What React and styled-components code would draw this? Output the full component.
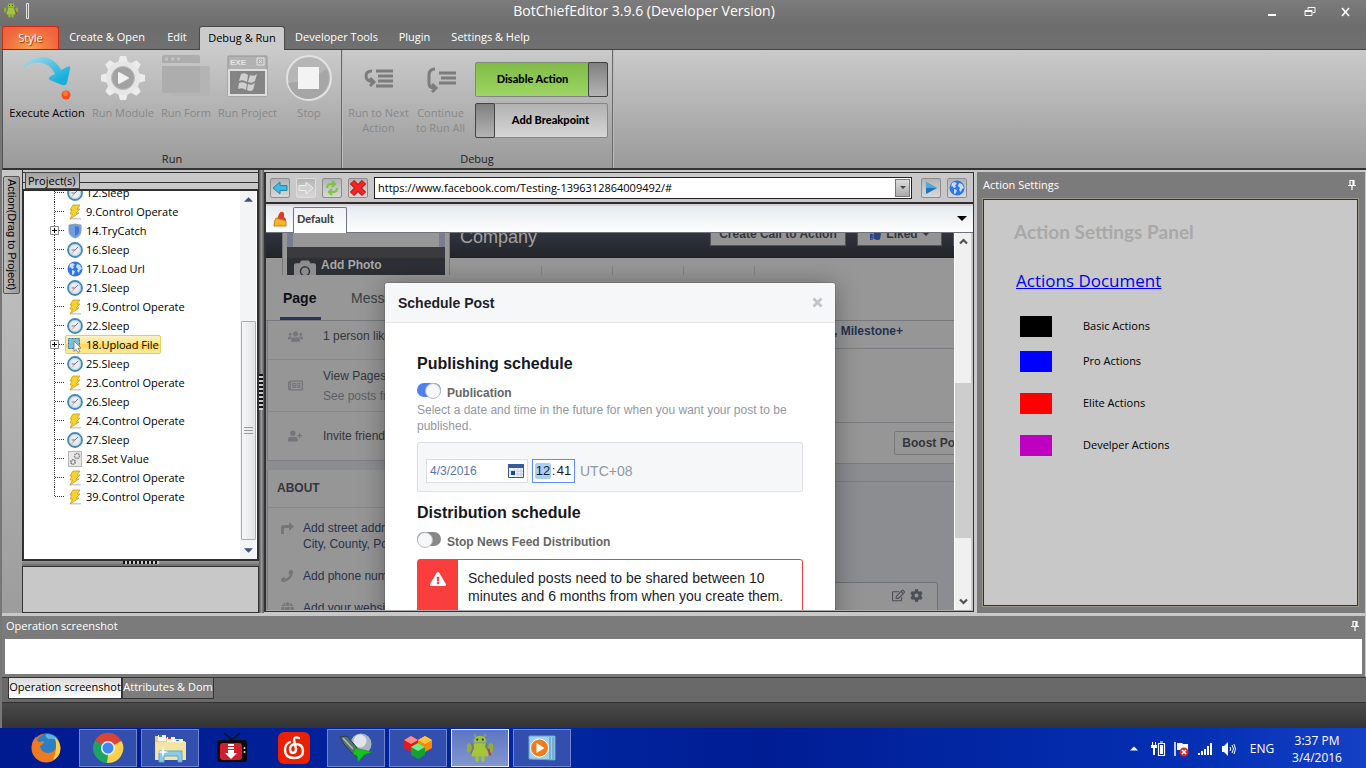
import React from 'react';
import styled, { createGlobalStyle } from 'styled-components';
import { FaCamera, FaUsers, FaUserPlus, FaPhoneAlt, FaGlobe, FaRegNewspaper, FaCog, FaRegEdit, FaThumbsUp, FaExclamationTriangle } from 'react-icons/fa';

const GlobalStyle = createGlobalStyle`
    * { box-sizing: border-box; }
    body { margin: 0; overflow: hidden; font-family: "Open Sans", "Noto Sans", sans-serif; font-size: 11px; color: #000; }
    button, input { font: inherit; color: inherit; margin: 0; padding: 0; border: 0; background: none; border-radius: 0; }
    h1, h2, h3, p, ul { margin: 0; padding: 0; font-weight: normal; list-style: none; }
    svg { display: block; flex: none; }
    a { color: inherit; text-decoration: none; }
`;

/* ---------- window ---------- */

const Desktop = styled.div`
    display: flex;
    flex-direction: column;
    height: 100vh;
    overflow: hidden;
    background: #6f6f6f;
`;

const TitleBar = styled.header`
    display: grid;
    grid-template-columns: 60px 1fr 110px;
    align-items: start;
    height: 26px;
    background: linear-gradient(#7c7c7c, #6d6d6d);
    color: #fff;
`;

const TitleLeft = styled.div`
    display: flex;
    gap: 7px;
    padding: 2px 0 0 3px;
`;

const Title = styled.h1`
    font-size: 14px;
    line-height: 22px;
    text-align: center;
    padding-right: 28px;
    white-space: nowrap;
`;

const WindowButtons = styled.div`
    display: flex;
    justify-content: flex-end;
    gap: 22px;
    padding: 4px 11px 0 0;
    button { width: 15px; height: 15px; }
`;

const AppWindow = styled.div`
    display: flex;
    flex-direction: column;
    flex: 1;
    min-height: 0;
    padding-left: 2px;
    background: #777;
`;

/* ---------- ribbon ---------- */

const RibbonTabs = styled.nav`
    display: flex;
    align-items: stretch;
    height: 24px;
    flex: none;
    background: linear-gradient(#6d6d6d, #707070);
    border-bottom: 1px solid #444;
`;

const RibbonTab = styled.button`
    width: ${p => p.$w}px;
    padding-bottom: 2px;
    color: #fff;
    text-align: center;
    white-space: nowrap;
`;

const StyleTab = styled(RibbonTab)`
    border: 1px solid #d02a12;
    border-bottom: 0;
    border-radius: 3px 3px 0 0;
    background: radial-gradient(ellipse at 50% 100%, #f9a24a, #f0673e 70%, #ee5f3b);
    text-shadow: 1px 1px 1px #8c2a10;
`;

const ActiveTab = styled(RibbonTab)`
    margin: 0 1px -1px 0;
    border: 1px solid #4a4a4a;
    border-bottom: 0;
    border-radius: 3px 3px 0 0;
    background: #cbcbcb;
    color: #000;
`;

const Ribbon = styled.div`
    display: flex;
    height: 120px;
    flex: none;
    background: linear-gradient(#cacaca, #9a9a9a);
    border-left: 1px solid #555;
    border-bottom: 2px solid #333;
`;

const RibbonGroup = styled.section`
    display: flex;
    flex-direction: column;
    justify-content: space-between;
    width: ${p => p.$w}px;
    border-right: 1px solid #6a6a6a;
    box-shadow: 1px 0 #bbb;
`;

const GroupBody = styled.div`
    display: grid;
    grid-template-columns: ${p => p.$cols};
    padding: 5px 4px 0 5px;
`;

const GroupName = styled.h2`
    font-size: 11px;
    line-height: 18px;
    text-align: center;
    color: #222;
`;

const RibbonButton = styled.button`
    display: flex;
    flex-direction: column;
    align-items: center;
    justify-content: flex-start;
    line-height: 15px;
    color: ${p => (p.disabled ? '#888' : '#000')};
    white-space: nowrap;
    svg { margin-bottom: 2px; }
`;

const Switches = styled.div`
    display: flex;
    flex-direction: column;
    gap: 6px;
    padding: 7px 0 0 4px;
`;

const Switch = styled.button`
    display: flex;
    flex-direction: ${p => (p.$on ? 'row' : 'row-reverse')};
    align-items: stretch;
    width: 133px;
    height: 35px;
    border: 1px solid #858585;
    border-radius: 2px;
    background: ${p => (p.$on ? 'linear-gradient(#7fbb45, #9dd664)' : 'linear-gradient(#b2b2b2, #d6d6d6)')};
    font-family: Lato, sans-serif;
    font-weight: 900;
    line-height: 32px;
    span { flex: 1; white-space: nowrap; }
    i {
        width: 20px;
        margin: -1px;
        border: 1px solid #444;
        border-radius: 2px;
        background: linear-gradient(#808080, #b4b4b4);
    }
`;

/* ---------- workspace ---------- */

const Workspace = styled.main`
    display: grid;
    grid-template-columns: 20px 237px 5px 1fr 3px 388px;
    flex: 1;
    min-height: 0;
    padding-right: 1px;
    background: #c8c8c8;
`;

const DragStrip = styled.aside`
    padding: 6px 2px 0 1px;
    background: linear-gradient(#c8c8c8, #9c9c9c);
`;

const DragTab = styled.button`
    width: 17px;
    height: 118px;
    border: 1px solid #555;
    border-radius: 2px;
    background: linear-gradient(90deg, #bbb, #989898);
    writing-mode: vertical-rl;
    font-family: "Liberation Sans", sans-serif;
    font-size: 11px;
    line-height: 15px;
    white-space: nowrap;
`;

const ProjectPane = styled.aside`
    display: flex;
    flex-direction: column;
    min-height: 0;
`;

const ProjectTabs = styled.div`
    flex: none;
    height: 19px;
    padding: 2px 0 0 2px;
    border-left: 1px solid #333;
    border-right: 1px solid #333;
    background: linear-gradient(#c8c8c8 2px, #333 2px 3px, #c8c8c8 3px 12px, #333 12px 13px, #c8c8c8 13px);
    button {
        display: block;
        width: 55px;
        height: 17px;
        padding-left: 2px;
        border: 1px solid #444;
        background: linear-gradient(#a2a2a2, #c4c4c4);
        line-height: 15px;
        text-align: left;
    }
`;

const TreeBox = styled.div`
    display: flex;
    flex: 1;
    min-height: 0;
    overflow: hidden;
    border: 2px solid #2e3032;
    background: #fff;
`;

const Tree = styled.ul`
    flex: 1;
    margin-top: -8px;
    padding-left: 26px;
`;

const TreeItem = styled.li`
    display: flex;
    align-items: center;
    height: 19px;
    white-space: nowrap;
`;

const Guide = styled.span`
    display: flex;
    align-items: center;
    width: 15px;
    height: 19px;
    background:
        repeating-linear-gradient(#333 0 1px, transparent 1px 2px) 4px 0 / 1px ${p => (p.$last ? '10px' : '100%')} no-repeat,
        repeating-linear-gradient(90deg, #333 0 1px, transparent 1px 2px) 5px 9px / 10px 1px no-repeat;
`;

const NodeLabel = styled.span`
    display: flex;
    align-items: center;
    gap: 3px;
    height: 19px;
    padding: 0 1px;
    border: 1px solid ${p => (p.$selected ? '#eac968' : 'transparent')};
    border-radius: 2px;
    background: ${p => (p.$selected ? 'linear-gradient(#fdf3c8, #fbe38c 45%, #fad75a 50%, #fdea9e)' : 'none')};
`;

const TreeScroll = styled.div`
    display: grid;
    grid-template-rows: 17px 113fr 220fr 2fr 17px;
    justify-items: center;
    align-items: center;
    width: 16px;
    margin-right: 1px;
    background: #f3f4f6;
    > svg:last-child { grid-row: 5; }
`;

const TreeThumb = styled.div`
    display: grid;
    place-items: center;
    grid-row: 3;
    width: 15px;
    height: 100%;
    border: 1px solid #a9adb3;
    border-radius: 1px;
    background: linear-gradient(90deg, #f6f6f6, #e2e4e6);
`;

const Splitter = styled.div`
    flex: none;
    height: 5px;
    display: grid;
    justify-content: center;
    background: linear-gradient(#999, #6a6a6a);
`;

const Grip = styled.i`
    width: ${p => (p.$vertical ? '4px' : '36px')};
    height: ${p => (p.$vertical ? '36px' : '3px')};
    background: repeating-linear-gradient(${p => (p.$vertical ? '180deg' : '90deg')}, #111 0 2px, #ccc 2px 4px);
`;

const LowerBox = styled.div`
    flex: none;
    height: 47px;
    border: 1px solid #333;
    background: #c8c8c8;
`;

const VSplitter = styled.div`
    display: grid;
    align-content: center;
    background: linear-gradient(90deg, #555, #999, #555);
`;

/* ---------- embedded browser ---------- */

const Browser = styled.section`
    display: flex;
    flex-direction: column;
    min-width: 0;
    min-height: 0;
    margin: 2px 0 1px;
    border: 1px solid #333;
    border-left-width: 2px;
    background: #c8c8c8;
`;

const AddressBar = styled.div`
    display: flex;
    align-items: center;
    flex: none;
    gap: 6px;
    height: 31px;
    padding: 0 6px 0 4px;
    border-bottom: 2px solid #2f2c30;
`;

const ToolButton = styled.button`
    display: grid;
    place-items: center;
    width: 20px;
    height: 20px;
    flex: none;
    border: 1px solid ${p => (p.disabled ? '#ddd' : '#8d8d8d')};
    border-radius: 2px;
    background: linear-gradient(#b4b4b4, #d8d8d8);
`;

const UrlBox = styled.div`
    display: flex;
    align-items: center;
    flex: 1;
    height: 22px;
    margin-right: 3px;
    padding: 1px;
    border: 1px solid #222;
    background: #fff;
    input { flex: 1; min-width: 0; padding-left: 2px; outline: 0; }
    button {
        display: grid;
        place-items: center;
        width: 15px;
        height: 18px;
        border: 1px solid #777;
        background: linear-gradient(#ddd, #aaa);
    }
`;

const PageTabs = styled.div`
    display: flex;
    align-items: flex-end;
    flex: none;
    height: 29px;
    padding-right: 5px;
    border-top: 2px solid #d8d0d4;
    border-bottom: 1px solid #70747e;
    background: linear-gradient(#e6eaef, #fdfdfe);
`;

const BroomButton = styled.button`
    display: grid;
    place-items: center;
    width: 27px;
    height: 26px;
`;

const PageTab = styled.button`
    width: 54px;
    height: 26px;
    margin: 0 auto -1px 0;
    padding: 0 0 4px 3px;
    border: 1px solid #70747e;
    border-bottom: 0;
    border-radius: 2px 2px 0 0;
    background: linear-gradient(#eef1f5, #fff);
    color: #444;
    font-family: Lato, sans-serif;
    font-weight: 900;
    text-align: left;
`;

const TabMenu = styled.button`
    display: grid;
    place-items: center;
    width: 12px;
    height: 28px;
`;

const Viewport = styled.div`
    display: flex;
    flex: 1;
    min-height: 0;
    padding-right: 2px;
    border-bottom: 1px solid #aaa;
    font-family: "Liberation Sans", sans-serif;
    font-size: 12px;
`;

const Page = styled.div`
    position: relative;
    flex: 1;
    min-width: 0;
    overflow: hidden;
    background: #8b8d91;
    color: #33363d;
`;

const PageScroll = styled.div`
    display: grid;
    grid-template-rows: 17px 133fr 155fr 55fr 17px;
    place-items: center;
    width: 17px;
    border-left: 1px solid #fff;
    background: #f0f0f0;
    i { grid-row: 3; width: 100%; height: 100%; background: #cdcdcd; }
    svg:last-child { grid-row: 5; }
`;

const Cover = styled.div`
    display: grid;
    grid-template-columns: 16px 168px 1fr;
    height: 42px;
    background: linear-gradient(#30343e, #222429 25px, #979797 25px);
`;

const Portrait = styled.div`
    grid-column: 2;
    display: flex;
    flex-direction: column;
    padding: 0 4px;
    border-left: 1px solid #777;
    border-right: 1px solid #777;
    background: #979797;
    overflow: hidden;
`;

const Photo = styled.div`
    height: 14px;
    flex: none;
    border: solid #787d90;
    border-width: 0 6px;
    background: #979797;
`;

const AddPhoto = styled.button`
    display: flex;
    align-items: center;
    gap: 5px;
    height: 35px;
    flex: none;
    padding-left: 7px;
    background: linear-gradient(#3b3b3d 10px, #2d2f36 12px);
    color: #a8a8a8;
    font-weight: bold;
    svg { margin-top: 10px; color: #8d8d8d; }
`;

const CoverBar = styled.div`
    display: grid;
    grid-template-rows: 25px 17px;
    grid-template-columns: 1fr 136px 85px 1px;
    column-gap: 11px;
    min-width: 0;
    overflow: hidden;
`;

const PageName = styled.h2`
    height: 25px;
    padding-left: 10px;
    color: #a2a2a2;
    font-size: 18px;
    line-height: 8px;
`;

const CoverButton = styled.button`
    display: flex;
    align-items: center;
    justify-content: center;
    gap: 5px;
    height: 24px;
    margin-top: -11px;
    border: 1px solid #555;
    background: #949494;
    font-weight: bold;
`;

const CoverNav = styled.ul`
    display: flex;
    grid-column: 1 / -1;
    align-items: end;
    padding-left: 21px;
    li { width: 71px; height: 9px; border-right: 1px solid #848484; }
`;

const PageNav = styled.nav`
    display: flex;
    height: 46px;
    padding-left: 14px;
    border-bottom: 1px solid #77797c;
    background: #979797;
`;

const PageNavLink = styled.a`
    width: 41px;
    margin-right: 30px;
    border-bottom: ${p => (p.$active ? '3px solid #26355d' : '0')};
    font-size: 14px;
    font-weight: ${p => (p.$active ? 'bold' : 'normal')};
    color: ${p => (p.$active ? '#0e1016' : '#3a3e47')};
    line-height: 46px;
    padding-left: ${p => (p.$active ? '3px' : '0')};
`;

const Columns = styled.div`
    display: grid;
    grid-template-columns: 320px 1fr;
`;

const Card = styled.section`
    margin: 0 0 9px 1px;
    border: 1px solid #7d7f83;
    border-top: 0;
    background: #969696;
`;

const InfoRow = styled.div`
    display: grid;
    grid-template-columns: 55px 1fr;
    align-items: center;
    height: ${p => p.$h}px;
    border-bottom: 1px solid #85878b;
    line-height: 20px;
    white-space: nowrap;
    &:first-child { padding-bottom: 8px; }
    &:last-child { border-bottom: 0; }
    svg { margin-left: 20px; color: #74767b; }
    small { display: block; font-size: 12px; color: #5c5f66; }
`;

const AboutTitle = styled.h3`
    height: 38px;
    padding-left: 9px;
    border-bottom: 1px solid #85878b;
    color: #34363c;
    font-size: 12px;
    font-weight: bold;
    line-height: 37px;
`;

const AboutLink = styled.a`
    display: grid;
    grid-template-columns: 35px 1fr;
    line-height: 16px;
    padding-top: 12px;
    margin-bottom: 4px;
    color: #26324f;
    white-space: nowrap;
    svg { margin: 2px 0 0 13px; color: #74767b; }
`;

const PhoneIcon = styled(FaPhoneAlt)`
    transform: scaleX(-1);
`;

const Feed = styled.div`
    padding-left: 200px;
`;

const ComposerRow = styled.div`
    display: flex;
    align-items: center;
    justify-content: flex-end;
    height: ${p => p.$h}px;
    border-bottom: 1px solid #7b7d82;
    background: #969696;
    overflow: hidden;
    white-space: nowrap;
`;

const Milestone = styled.a`
    width: 120px;
    padding-bottom: 8px;
    color: #26324f;
    font-weight: bold;
`;

const Boost = styled.button`
    width: 80px;
    height: 24px;
    margin-right: -20px;
    flex: none;
    border: 1px solid #777;
    border-radius: 2px;
    font-weight: bold;
`;

const FeedGap = styled.div`
    height: 18px;
    border-bottom: 1px solid #7b7d82;
`;

const PostCard = styled.div`
    display: flex;
    justify-content: flex-end;
    gap: 5px;
    height: 60px;
    margin: 100px 16px 0 0;
    padding: 6px 14px;
    border: 1px solid #6e7179;
    border-radius: 2px;
    background: #949494;
    color: #4b4e56;
`;

/* ---------- schedule dialog ---------- */

const Dialog = styled.form`
    position: absolute;
    top: 50px;
    left: 119px;
    width: 450px;
    height: 420px;
    border-radius: 3px;
    background: #fff;
    box-shadow: 0 2px 26px rgba(0, 0, 0, 0.35), 0 0 0 1px rgba(0, 0, 0, 0.1);
    color: #1d2129;
`;

const DialogHead = styled.header`
    display: flex;
    align-items: center;
    justify-content: space-between;
    height: 40px;
    padding: 0 12px 0 13px;
    border-bottom: 1px solid #e5e5e5;
    border-radius: 3px 3px 0 0;
    background: #f6f7f9;
    h2 { font-size: 14px; font-weight: bold; }
`;

const DialogBody = styled.div`
    padding: 30px 32px 0;
    h3 { font-size: 16px; font-weight: bold; line-height: 22px; color: #141823; }
`;

const ToggleRow = styled.label`
    display: flex;
    align-items: center;
    gap: 6px;
    height: 27px;
    padding-top: 2px;
    color: #666;
    font-weight: bold;
    span { padding-top: 6px; }
`;

const Toggle = styled.input`
    appearance: none;
    display: flex;
    justify-content: flex-end;
    width: 24px;
    height: 14px;
    border-radius: 7px;
    background: #888;
    flex-direction: row-reverse;
    &::before {
        content: "";
        width: 14px;
        height: 14px;
        border: 1px solid #bbb;
        border-radius: 50%;
        background: #f6f7f9;
    }
    &:checked { background: #4e80ee; flex-direction: row; }
`;

const Hint = styled.p`
    line-height: 16px;
    color: #9197a3;
`;

const DateBox = styled.div`
    display: flex;
    align-items: center;
    height: 50px;
    margin: 8px 0 10px;
    padding: 7px 8px 0;
    border: 1px solid #dddfe2;
    border-radius: 2px;
    background: #f6f7f9;
    color: #9197a3;
    font-size: 14px;
`;

const DateField = styled.label`
    display: flex;
    align-items: center;
    width: 102px;
    height: 24px;
    margin-right: 4px;
    padding: 0 3px;
    border: 1px solid #dcdee3;
    background: #fff;
    color: #5a74ab;
    font-size: 12px;
    input { flex: 1; min-width: 0; }
`;

const TimeField = styled.div`
    display: flex;
    align-items: center;
    justify-content: center;
    width: 43px;
    height: 24px;
    margin-right: 5px;
    border: 1px solid #5890ff;
    background: #fff;
    color: #1d2129;
    font-size: 13px;
    input { width: 16px; height: 16px; text-align: center; }
    input:first-child { background: #a9cff8; border-radius: 2px; }
    span { width: 5px; text-align: center; }
`;

const Alert = styled.div`
    display: grid;
    grid-template-columns: 40px 1fr;
    height: 80px;
    margin-top: 8px;
    border: 1px solid #fa3e3e;
    border-radius: 3px;
    font-size: 14px;
    line-height: 18px;
    svg { justify-self: center; margin-top: 11px; color: #fff; }
    i { display: grid; background: #fa3e3e; align-items: start; }
    p { padding: 9px 0 0 10px; white-space: nowrap; }
`;

/* ---------- settings ---------- */

const SettingsPane = styled.aside`
    display: flex;
    flex-direction: column;
    margin-top: 2px;
    padding: 0 7px 7px 6px;
    background: #7b7b7b;
`;

const PaneHead = styled.header`
    display: flex;
    align-items: center;
    justify-content: space-between;
    height: ${p => p.$h}px;
    flex: none;
    padding: 0 2px 2px 0;
    color: #fff;
    h2 { font-size: 11px; }
`;

const SettingsBox = styled.div`
    flex: 1;
    padding: 21px 30px;
    border: 1px solid #333;
    outline: 1px solid #9c998c;
    background: #c8c8c8;
`;

const SettingsTitle = styled.h2`
    color: #a8a8a8;
    font-family: Lato, sans-serif;
    font-size: 19px;
    font-weight: bold;
    line-height: 22px;
    margin-bottom: 24px;
`;

const DocLink = styled.a`
    display: inline-block;
    margin: 0 0 22px 2px;
    color: #0000f0;
    font-size: 17px;
    line-height: 27px;
    text-decoration: underline;
`;

const Legend = styled.ul`
    padding-left: 6px;
    li { display: flex; align-items: center; gap: 31px; height: 21px; margin-bottom: 21px; }
    li:first-child { margin-bottom: 14px; }
    span { padding-bottom: 3px; }
`;

const Swatch = styled.i`
    width: 32px;
    height: 21px;
    background: ${p => p.$color};
`;

/* ---------- bottom panel ---------- */

const OperationPane = styled.section`
    flex: none;
    border-top: 3px solid #c8c8c8;
    border-right: 1px solid #c8c8c8;
    background: #7b7b7b;
    padding: 0 3px 3px;
    ${PaneHead} { padding: 0 3px 4px 1px; }
`;

const Output = styled.div`
    height: 35px;
    background: #fff;
`;

const BottomTabs = styled.div`
    display: flex;
    height: 26px;
    flex: none;
    padding-left: 6px;
    border-top: 1px solid #333;
    border-bottom: 1px solid #333;
    background: #696969;
`;

const BottomTab = styled.button`
    width: ${p => p.$w}px;
    height: 21px;
    padding-bottom: 3px;
    border: 1px solid #333;
    border-top: 0;
    background: ${p => (p.$active ? 'linear-gradient(#dcdcdc, #fff)' : '#7d7d7d')};
    color: ${p => (p.$active ? '#000' : '#fff')};
    white-space: nowrap;
`;

const StatusBar = styled.footer`
    height: 25px;
    flex: none;
    background: linear-gradient(#4a4a4a, #333);
`;

/* ---------- taskbar ---------- */

const TaskBar = styled.footer`
    display: flex;
    justify-content: space-between;
    height: 40px;
    flex: none;
    background: linear-gradient(90deg, #001a90, #0026a0 40%, #001d94 56%, #0430b4 88%, #1440c6);
    color: #fff;
`;

const Tasks = styled.div`
    display: flex;
    gap: 4px;
    padding: 1px 0 1px 17px;
`;

const Task = styled.button`
    display: grid;
    place-items: center;
    width: 58px;
    border: 1px solid ${p => (p.$state === 'active' ? '#e8ecff' : p.$state === 'open' ? '#6f86cc' : 'transparent')};
    background: ${p => (p.$state === 'active' ? 'linear-gradient(#5b76c2, #8496cf)' : p.$state === 'open' ? '#324fae' : 'none')};
`;

const Tray = styled.div`
    display: flex;
    align-items: center;
    gap: 8px;
    padding-top: 1px;
    font-size: 12px;
    > svg:first-child { margin-right: 4px; }
`;

const Lang = styled.button`
    width: 34px;
`;

const Clock = styled.div`
    width: 79px;
    padding-right: 19px;
    line-height: 17px;
    text-align: center;
`;

/* ---------- drawings ---------- */

const Android = ({ size }) => (
    <svg width={size} height={size} viewBox="0 0 32 32">
        <path d="M10 1l2 4M22 1l-2 4" stroke="#93a84a" strokeWidth="1.4" />
        <path d="M9 10q0-7 7-7t7 7z" fill="#9cc03e" />
        <path d="M10 11h12q1 5 3 12 .5 2-2 2H9q-2.500 0-2-2 2-6 3-12z" fill="#a4c639" />
        <rect x="2" y="11" width="5" height="10" rx="2.500" fill="#8fb033" />
        <rect x="25" y="11" width="5" height="10" rx="2.500" fill="#8fb033" />
        <rect x="11" y="24" width="4" height="7" rx="2" fill="#9cc03e" />
        <rect x="17" y="24" width="4" height="7" rx="2" fill="#9cc03e" />
        <circle cx="13" cy="7" r="1.200" fill="#333" /><circle cx="19" cy="7" r="1.200" fill="#333" />
        <path d="M7 11l2 5-3 6M24 10l-2 4 3 5" stroke="#777" strokeWidth="1.500" fill="none" />
        <path d="M25 17l2 7" stroke="#c33" strokeWidth="2" />
    </svg>
);

const ExecuteIcon = () => (
    <svg width="50" height="48" viewBox="0 0 50 48">
        <defs><linearGradient id="arrow" x1="0" y1="0" x2="1" y2="1"><stop offset="0" stopColor="#a6dcf0" /><stop offset=".8" stopColor="#17b0dd" /></linearGradient></defs>
        <path d="M1 13C10-1 30-3 39 15L45 12Q49 10 48 14L45 28Q44 31 40 30L28 25Q25 23 29 21L33 19C28 8 15 3 1 13z" fill="url(#arrow)" />
        <circle cx="44" cy="40" r="4.500" fill="#fb4a1c" /><circle cx="43.500" cy="38.500" r="2.500" fill="#fd7b2c" />
    </svg>
);

const teeth = [0, 45, 90, 135, 180, 225, 270, 315];
const GearIcon = () => (
    <svg width="50" height="48" viewBox="0 0 50 48">
        {teeth.map(a => <path key={a} d="M20 8l2-7h6l2 7z" fill="#ececec" transform={'rotate(' + a + ' 25 23)'} />)}
        <circle cx="25" cy="23" r="17" fill="#e6e6e6" />
        <circle cx="25" cy="23" r="11.500" fill="#a2a2a2" stroke="#bcbcbc" />
        <path d="M21 18v10l9-5z" fill="#f1f1f1" stroke="#f1f1f1" strokeWidth="2" strokeLinejoin="round" />
    </svg>
);

const FormIcon = () => (
    <svg width="50" height="48" viewBox="0 0 50 48">
        <rect x="10" y="11" width="39" height="30" rx="2" fill="#b4b4b4" />
        <path d="M3 0h34q2 0 2 2v6H1V2q0-2 2-2z" fill="#adadad" />
        <path d="M1 11h38v25q0 2-2 2H3q-2 0-2-2z" fill="#adadad" />
        <path d="M4 4h3M10 4h3M16 4h3" stroke="#c2c2c2" strokeWidth="3" />
    </svg>
);

const ExeIcon = () => (
    <svg width="42" height="48" viewBox="0 0 42 48">
        <rect x="1" y="1" width="39" height="40" rx="1" fill="#b2b2b2" stroke="#959595" />
        <text x="3" y="10" fontFamily="Liberation Sans" fontWeight="bold" fontSize="8" fill="#e5e5e5">EXE</text>
        <path d="M30 3h7v7h-7zM32 5l3 3m0-3l-3 3" fill="none" stroke="#e5e5e5" />
        <rect x="2" y="15" width="37" height="25" fill="#848484" stroke="#dedede" strokeWidth="2" />
        <path d="M14 19q4-2 7 1l-1 7q-4-3-8-1zM23 20q4 2 7-1l-2 7q-3 3-7 1zM12 28q4-2 8 1l-1 6q-4-3-8-1zM21 29q4 2 7-1l-2 7q-3 2-6 0z" fill="#cfcfcf" />
    </svg>
);

const StopIcon = () => (
    <svg width="48" height="48" viewBox="0 0 48 48">
        <circle cx="24" cy="23" r="22" fill="#b6b6b6" stroke="#e2e2e2" strokeWidth="2" />
        <path d="M3 28Q22 27 42 14A21 21 0 0 1 24 44Q8 44 3 28z" fill="#a6a6a6" />
        <rect x="13" y="12" width="21" height="22" fill="#f3f3f3" />
    </svg>
);

const StepIcon = ({ long }) => (
    <svg width="32" height="48" viewBox="0 0 32 48" fill="none" stroke="#7c7c7c" strokeWidth="3">
        {long
            ? <path d="M10 14Q4 14 4 20v8q0 5 5 5M7 29l4 4-4 4" />
            : <path d="M9 16q-6 0-6 5t7 6M7 23l4 4-4 4" />}
        <path d={long ? 'M14 18h17M16 23h15M14 28h17' : 'M13 16h17M15 21h15M15 26h15M13 31h17'} />
    </svg>
);

const ClockIcon = () => (
    <svg width="16" height="16" viewBox="0 0 16 16">
        <circle cx="8" cy="8" r="7" fill="#e6eef4" stroke="#4489b0" strokeWidth="1.800" />
        <circle cx="8" cy="8" r="5.500" fill="none" stroke="#b4d2e4" />
        <path d="M8 8l3-3M8 8H4.500" stroke="#777" /><path d="M8 8l-3 3.500" stroke="#d66" strokeWidth=".7" />
    </svg>
);
const BoltIcon = () => (
    <svg width="16" height="16" viewBox="0 0 16 16">
        <path d="M3 14h11v1.500H3z" fill="#ccc" />
        <path d="M6 1h7l-3 4h3l-4 4h3l-9 6 2.500-5H3l2-4H3z" fill="#f6d42c" stroke="#c79a25" strokeWidth=".8" />
    </svg>
);
const ShieldIcon = () => (
    <svg width="16" height="16" viewBox="0 0 16 16">
        <path d="M8 1q3 1 6 1v6q0 5-6 7-6-2-6-7V2q3 0 6-1z" fill="#6d9ee0" stroke="#8d9db4" />
        <path d="M8 3q2 1 4 1v4q0 3-4 5z" fill="#3d78cc" />
    </svg>
);
const EarthIcon = () => (
    <svg width="16" height="16" viewBox="0 0 16 16">
        <circle cx="8" cy="8" r="7.500" fill="#2f74e8" />
        <path d="M3 3l3-1 2 2-2 1 1 2-2 1-2-2-1 1zM5 9l3 1-1 3-2 1zM10 3l3 1 2 4-2 1-1 3-2-2 1-2-2-2z" fill="#c8e0fa" />
    </svg>
);
const UploadIcon = () => (
    <svg width="16" height="16" viewBox="0 0 16 16">
        <rect x="1.500" y="1.500" width="11" height="10" fill="#7fc0cf" stroke="#2b6fc0" strokeDasharray="2 1" />
        <path d="M7 4l7 7-3 .5 2 3-2 1-2-3-2 2z" fill="#f3f3f3" stroke="#777" strokeWidth=".8" />
    </svg>
);
const SetIcon = () => (
    <svg width="16" height="16" viewBox="0 0 16 16" fill="none">
        <rect x="1.500" y=".5" width="13" height="15" fill="#e8e8e8" stroke="#b6b6b6" />
        <circle cx="10" cy="5" r="2.500" stroke="#8a8a8a" strokeWidth="1.500" strokeDasharray="1.500 .6" />
        <circle cx="6" cy="11" r="2.200" stroke="#777" strokeWidth="1.500" strokeDasharray="1.500 .6" />
    </svg>
);
const PlusBox = () => (
    <svg width="9" height="9" viewBox="0 0 9 9"><path d="M.5.5h8v8h-8z" fill="#fff" stroke="#888" /><path d="M2 4.500h5M4.500 2v5" stroke="#000" /></svg>
);
const Caret = ({ up, color = '#3f4f80', w = 9 }) => (
    <svg width={w} height="5" viewBox="0 0 10 5"><path d={up ? 'M0 5h10L5 0z' : 'M0 0h10L5 5z'} fill={color} /></svg>
);
const Chevron = ({ up }) => (
    <svg width="9" height="7" viewBox="0 0 9 7"><path d={up ? 'M1 5.500l3.500-3.500L8 5.500' : 'M1 1.500L4.500 5 8 1.500'} fill="none" stroke="#505050" strokeWidth="2.200" /></svg>
);
const PinIcon = () => (
    <svg width="8" height="10" viewBox="0 0 8 10"><path d="M2 .5h4v5H2zM5 1v4M0 5.500h8M4 6v4" fill="none" stroke="#fff" strokeWidth="1.200" /></svg>
);
const TurnIcon = () => (
    <svg width="13" height="13" viewBox="0 0 13 13"><path d="M0 12V6q0-3 3-3h5V0l5 4.500L8 9V6H4q-1 0-1 1v5z" fill="currentColor" /></svg>
);

/* ---------- data ---------- */

const icons = { clock: ClockIcon, bolt: BoltIcon, shield: ShieldIcon, earth: EarthIcon, upload: UploadIcon, set: SetIcon };

const nodes = [
    ['12.Sleep', 'clock'], ['9.Control Operate', 'bolt'], ['14.TryCatch', 'shield', true], ['16.Sleep', 'clock'],
    ['17.Load Url', 'earth'], ['21.Sleep', 'clock'], ['19.Control Operate', 'bolt'], ['22.Sleep', 'clock'],
    ['18.Upload File', 'upload', true], ['25.Sleep', 'clock'], ['23.Control Operate', 'bolt'], ['26.Sleep', 'clock'],
    ['24.Control Operate', 'bolt'], ['27.Sleep', 'clock'], ['28.Set Value', 'set'], ['32.Control Operate', 'bolt'],
    ['39.Control Operate', 'bolt'],
];

const legend = [['Basic Actions', '#000'], ['Pro Actions', '#00f'], ['Elite Actions', '#f00'], ['Develper Actions', '#c000c0']];

/* ---------- parts ---------- */

function RibbonArea() {
    return (
        <>
            <RibbonTabs>
                <StyleTab $w={57}>Style</StyleTab>
                <RibbonTab $w={96}>Create &amp; Open</RibbonTab>
                <RibbonTab $w={44}>Edit</RibbonTab>
                <ActiveTab $w={86}>Debug &amp; Run</ActiveTab>
                <RibbonTab $w={101}>Developer Tools</RibbonTab>
                <RibbonTab $w={55}>Plugin</RibbonTab>
                <RibbonTab $w={97}>Settings &amp; Help</RibbonTab>
            </RibbonTabs>
            <Ribbon>
                <RibbonGroup $w={339}>
                    <GroupBody $cols="78px 74px 52px 71px 52px">
                        <RibbonButton><ExecuteIcon />Execute Action</RibbonButton>
                        <RibbonButton disabled><GearIcon />Run Module</RibbonButton>
                        <RibbonButton disabled><FormIcon />Run Form</RibbonButton>
                        <RibbonButton disabled><ExeIcon />Run Project</RibbonButton>
                        <RibbonButton disabled><StopIcon />Stop</RibbonButton>
                    </GroupBody>
                    <GroupName>Run</GroupName>
                </RibbonGroup>
                <RibbonGroup $w={271}>
                    <GroupBody $cols="63px 61px 1fr">
                        <RibbonButton disabled><StepIcon />Run to Next<br />Action</RibbonButton>
                        <RibbonButton disabled><StepIcon long />Continue<br />to Run All</RibbonButton>
                        <Switches>
                            <Switch $on><span>Disable Action</span><i /></Switch>
                            <Switch><span>Add Breakpoint</span><i /></Switch>
                        </Switches>
                    </GroupBody>
                    <GroupName>Debug</GroupName>
                </RibbonGroup>
            </Ribbon>
        </>
    );
}

function ProjectTree() {
    return (
        <ProjectPane>
            <ProjectTabs><button>Project(s)</button></ProjectTabs>
            <TreeBox>
                <Tree>
                    {nodes.map(([name, icon, branch], index) => {
                        const Icon = icons[icon];
                        return (
                            <TreeItem key={name}>
                                <Guide $last={index === nodes.length - 1}>{branch && <PlusBox />}</Guide>
                                <NodeLabel $selected={icon === 'upload'}><Icon />{name}</NodeLabel>
                            </TreeItem>
                        );
                    })}
                </Tree>
                <TreeScroll>
                    <Caret up />
                    <TreeThumb><svg width="9" height="7"><path d="M0 .5h9M0 3.500h9M0 6.500h9" stroke="#999" /></svg></TreeThumb>
                    <Caret />
                </TreeScroll>
            </TreeBox>
            <Splitter><Grip /></Splitter>
            <LowerBox />
        </ProjectPane>
    );
}

function ScheduleDialog() {
    return (
        <Dialog onSubmit={e => e.preventDefault()}>
            <DialogHead>
                <h2>Schedule Post</h2>
                <button type="button" aria-label="Close">
                    <svg width="11" height="11" viewBox="0 0 11 11"><path d="M1.500 1.500l8 8M9.500 1.500l-8 8" stroke="#bec2c9" strokeWidth="2.600" /></svg>
                </button>
            </DialogHead>
            <DialogBody>
                <h3>Publishing schedule</h3>
                <ToggleRow><Toggle type="checkbox" defaultChecked /><span>Publication</span></ToggleRow>
                <Hint>Select a date and time in the future for when you want your post to be published.</Hint>
                <DateBox>
                    <DateField>
                        <input type="text" defaultValue="4/3/2016" aria-label="Date" />
                        <svg width="16" height="14" viewBox="0 0 16 14">
                            <path d="M.5.5h15v13H.5z" fill="#f2f4f9" stroke="#3b5998" />
                            <path d="M0 0h16v4H0z" fill="#3b5998" />
                            <path d="M1 7h14M1 10h14M6 4v9M10 4v9M13 4v9" stroke="#c3cbdf" />
                            <path d="M3 7h4v4H3z" fill="#2c4480" />
                        </svg>
                    </DateField>
                    <TimeField>
                        <input type="text" defaultValue="12" aria-label="Hour" /><span>:</span>
                        <input type="text" defaultValue="41" aria-label="Minute" />
                    </TimeField>
                    UTC+08
                </DateBox>
                <h3>Distribution schedule</h3>
                <ToggleRow><Toggle type="checkbox" /><span>Stop News Feed Distribution</span></ToggleRow>
                <Alert>
                    <i><FaExclamationTriangle size={16} /></i>
                    <p>Scheduled posts need to be shared between 10<br />minutes and 6 months from when you create them.</p>
                </Alert>
            </DialogBody>
        </Dialog>
    );
}

function FacebookPage() {
    return (
        <Page>
            <Cover>
                <Portrait>
                    <Photo />
                    <AddPhoto><FaCamera size={22} />Add Photo</AddPhoto>
                </Portrait>
                <CoverBar>
                    <PageName>Company</PageName>
                    <CoverButton>Create Call to Action</CoverButton>
                    <CoverButton><FaThumbsUp size={11} color="#29448a" />Liked<Caret w={6} color="#33363d" /></CoverButton>
                    <CoverButton aria-label="More" />
                    <CoverNav><li /><li /><li /><li /></CoverNav>
                </CoverBar>
            </Cover>
            <PageNav>
                <PageNavLink href="#" $active>Page</PageNavLink>
                <PageNavLink href="#">Messages</PageNavLink>
            </PageNav>
            <Columns>
                <div>
                    <Card>
                        <InfoRow $h={39}><FaUsers size={15} /><span>1 person likes this</span></InfoRow>
                        <InfoRow $h={52}><FaRegNewspaper size={15} /><span>View Pages Feed<small>See posts from Pages</small></span></InfoRow>
                        <InfoRow $h={48}><FaUserPlus size={14} /><span>Invite friends</span></InfoRow>
                    </Card>
                    <Card>
                        <AboutTitle>ABOUT</AboutTitle>
                        <AboutLink href="#"><TurnIcon /><span>Add street address<br />City, County, Postcode</span></AboutLink>
                        <AboutLink href="#"><PhoneIcon size={12} /><span>Add phone number</span></AboutLink>
                        <AboutLink href="#"><FaGlobe size={13} /><span>Add your website</span></AboutLink>
                    </Card>
                </div>
                <Feed>
                    <ComposerRow $h={28}><Milestone href="#">, Milestone+</Milestone></ComposerRow>
                    <ComposerRow $h={74} />
                    <ComposerRow $h={41}><Boost>Boost Post</Boost></ComposerRow>
                    <FeedGap />
                    <PostCard><FaRegEdit size={13} /><FaCog size={13} /></PostCard>
                </Feed>
            </Columns>
            <ScheduleDialog />
        </Page>
    );
}

function BrowserPane() {
    return (
        <Browser>
            <AddressBar>
                <ToolButton aria-label="Back"><svg width="16" height="14" viewBox="0 0 16 14"><path d="M1 7l7-6v3.500h7v5H8V13z" fill="#3dbce8" stroke="#2583ae" /></svg></ToolButton>
                <ToolButton disabled aria-label="Forward"><svg width="16" height="14" viewBox="0 0 16 14"><path d="M15 7L8 1v3.500H1v5h7V13z" fill="#d0d0d0" stroke="#eee" /></svg></ToolButton>
                <ToolButton aria-label="Refresh"><svg width="16" height="16" viewBox="0 0 16 16" fill="none" stroke="#7cc642" strokeWidth="2.200"><path d="M3 8q0-4 4-4h3M8 1l3 3-3 3M13 8q0 4-4 4H6M8 9l-3 3 3 3" /></svg></ToolButton>
                <ToolButton aria-label="Stop"><svg width="18" height="18" viewBox="0 0 18 18"><path d="M3 3l12 12M15 3L3 15" stroke="#b50e0e" strokeWidth="6" /><path d="M3 3l12 12M15 3L3 15" stroke="#f32424" strokeWidth="4" /></svg></ToolButton>
                <UrlBox>
                    <input type="text" aria-label="Address" defaultValue="https://www.facebook.com/Testing-1396312864009492/#" />
                    <button aria-label="History"><Caret w={6} color="#444" /></button>
                </UrlBox>
                <ToolButton aria-label="Go"><svg width="14" height="14" viewBox="0 0 14 14"><path d="M2 1l11 6-11 6z" fill="#1677bd" /><path d="M2 1l11 6H2z" fill="#54a5da" /></svg></ToolButton>
                <ToolButton aria-label="Open in browser"><EarthIcon /></ToolButton>
            </AddressBar>
            <PageTabs>
                <BroomButton aria-label="Clear">
                    <svg width="14" height="16" viewBox="0 0 14 16"><path d="M6 3q2-4 5-1v4l2 2v2L4 8z" fill="#e03a25" /><path d="M3 7l10 3v5H1q0-5 2-8z" fill="#f5b726" stroke="#c5821c" /></svg>
                </BroomButton>
                <PageTab>Default</PageTab>
                <TabMenu aria-label="Tabs"><Caret color="#000" w={10} /></TabMenu>
            </PageTabs>
            <Viewport>
                <FacebookPage />
                <PageScroll><Chevron up /><i /><Chevron /></PageScroll>
            </Viewport>
        </Browser>
    );
}

function ActionSettings() {
    return (
        <SettingsPane>
            <PaneHead $h={27}><h2>Action Settings</h2><PinIcon /></PaneHead>
            <SettingsBox>
                <SettingsTitle>Action Settings Panel</SettingsTitle>
                <DocLink href="#">Actions Document</DocLink>
                <Legend>
                    {legend.map(([name, color]) => <li key={name}><Swatch $color={color} /><span>{name}</span></li>)}
                </Legend>
            </SettingsBox>
        </SettingsPane>
    );
}

const taskIcons = [
    ['Firefox', null, <svg width="32" height="32" viewBox="0 0 32 32"><circle cx="16" cy="16" r="14.500" fill="#e66b1f" /><circle cx="18" cy="13" r="11.500" fill="#2b7fc4" /><path d="M16 2q9 0 12 7-5-3-9-2-4-1-3-5z" fill="#5fb3e0" /><path d="M6 5q0 4 3 5l5-1q0 3-4 5 1 7 8 7 7 0 9-8l3 7q-4 10-14 10Q4 29 2 18 1 9 6 5z" fill="#ee7a22" /><path d="M25 5q7 7 5 15-2 6-7 8 5-10 2-23z" fill="#fbcf45" /></svg>],
    ['Chrome', 'open', <svg width="32" height="32" viewBox="0 0 32 32"><path d="M16 16L3 8.500A15 15 0 0 1 29.500 9z" fill="#db4437" /><path d="M16 16l13.500-7A15 15 0 0 1 15 31z" fill="#fdd14d" /><path d="M16 16l-1 15A15 15 0 0 1 3 8.500z" fill="#1da462" /><circle cx="16" cy="16" r="7" fill="#f1f1f1" /><circle cx="16" cy="16" r="5.500" fill="#4285f4" /></svg>],
    ['Explorer', 'open', <svg width="34" height="32" viewBox="0 0 34 32"><path d="M2 4h8l2 2h8l2 3h10v19H2z" fill="#e9cf7c" /><path d="M5 3h8v6H5zM14 5h8v5h-8zM22 7h8v4h-8z" fill="#f6f6ee" /><path d="M6 3h3v2H6z" fill="#2c9a3c" /><path d="M15 5h3v2h-3z" fill="#c33" /><path d="M23 8h3v1h-3z" fill="#27c" /><path d="M2 10h31v18H2z" fill="#f4e3a1" /><path d="M6 30V19h23v11h-4v-6H11v6z" fill="#8acbe6" stroke="#5aa9cd" /><path d="M10 14l1 5 5 1-5 1-1 5-1-5-5-1 5-1z" fill="#fff" /></svg>],
    ['Video Downloader', null, <svg width="32" height="34" viewBox="0 0 32 34"><path d="M8 2l8 7 8-7" fill="none" stroke="#111" strokeWidth="1.500" /><rect x="1" y="9" width="30" height="22" rx="3" fill="#0b0b0b" /><rect x="4" y="12" width="22" height="17" rx="3" fill="#cf1f2c" /><path d="M12 14h6M12 17h6" stroke="#fff" strokeWidth="2" /><path d="M12 19h6v3h3l-6 6-6-6h3z" fill="#fff" /><circle cx="28.500" cy="17" r="1" fill="#ddd" /><circle cx="28.500" cy="21" r="1" fill="#ddd" /></svg>],
    ['Music', null, <svg width="32" height="32" viewBox="0 0 32 32"><rect width="32" height="32" rx="6" fill="#ea2000" /><path d="M21 6q-5-2-5 2l2 9q0 4-3 4t-3-4 5-5q8 0 8 7t-9 7-9-8q0-6 5-8" fill="none" stroke="#fff" strokeWidth="2.400" strokeLinecap="round" /></svg>],
    ['Globe Tool', 'open', <svg width="34" height="32" viewBox="0 0 34 32"><circle cx="22" cy="12" r="10.500" fill="#aab3c1" /><circle cx="21" cy="9" r="6.500" fill="#dfe4ea" /><path d="M1 5l7-1 11 13 1 9-6-4L5 12z" fill="#55736f" stroke="#2c3a3c" /><path d="M4 6l10 11" stroke="#a9bdb8" strokeWidth="1.500" /><path d="M16 16l17 4-8 3-6 7-1-6-4-2z" fill="#16c41f" stroke="#0d8a17" strokeWidth=".6" /></svg>],
    ['Cubes', 'open', <svg width="32" height="28" viewBox="0 0 32 28"><path d="M2 6l7-4 7 4v8l-7 4-7-4z" fill="#e01b1b" /><path d="M2 6l7-4 7 4-7 4z" fill="#ff8c8c" /><path d="M16 6l7-4 7 4v8l-7 4-7-4z" fill="#ff8800" /><path d="M16 6l7-4 7 4-7 4z" fill="#ffc53a" /><path d="M9 13l7-4 7 4v8l-7 4-7-4z" fill="#15a030" /><path d="M9 13l7-4 7 4-7 4z" fill="#77ea80" /></svg>],
    ['BotChief', 'active', <Android size={30} />],
    ['Media Player', 'open', <svg width="30" height="28" viewBox="0 0 30 28"><path d="M2 2h26v24l-26-1z" fill="#9ed2ec" stroke="#65a8cc" /><path d="M23 3v22M26 3v22" stroke="#4790b8" /><circle cx="12.500" cy="14" r="9" fill="#f07d1c" stroke="#fff" /><path d="M9.500 9v10l8-5z" fill="#fff" /></svg>],
];

function Taskbar() {
    return (
        <TaskBar>
            <Tasks>
                {taskIcons.map(([name, state, icon]) => <Task key={name} $state={state} aria-label={name}>{icon}</Task>)}
            </Tasks>
            <Tray>
                <Caret up w={8} color="#fff" />
                <svg width="16" height="16" viewBox="0 0 16 16" fill="none" stroke="#fff"><path d="M2.500 1v3M5.500 1v3M1 4.500h6" /><path d="M1 5h6v2H5v7H3V7H1z" fill="#fff" stroke="none" /><path d="M8.500 2.500h6v12h-6zM10 1h3" strokeWidth="1.200" /><path d="M10 4h3v9h-3z" fill="#fff" stroke="none" /></svg>
                <svg width="15" height="16" viewBox="0 0 15 16"><path d="M1 1v14" stroke="#fff" strokeWidth="1.500" /><path d="M3 2h5l1 1h5v6H3z" fill="#fff" /><circle cx="10" cy="11" r="4.500" fill="#dc2b23" /><path d="M8 9l4 4M12 9l-4 4" stroke="#fff" strokeWidth="1.500" /></svg>
                <svg width="16" height="16" viewBox="0 0 16 16" fill="#fff"><path d="M1 12h2v2H1zM4 10h2v4H4zM7 8h2v6H7zM10 5h2v9h-2zM13 2h2v12h-2z" /></svg>
                <svg width="16" height="16" viewBox="0 0 16 16"><path d="M1 5h2l4-4v14l-4-4H1z" fill="#fff" /><path d="M9 6q1.500 2 0 4M11 4q3 4 0 8M13 3q3 5 0 10" fill="none" stroke="#fff" /></svg>
                <Lang>ENG</Lang>
                <Clock>3:37 PM<br />3/4/2016</Clock>
            </Tray>
        </TaskBar>
    );
}

export default function App() {
    return (
        <Desktop>
            <GlobalStyle />
            <TitleBar>
                <TitleLeft>
                    <Android size={16} />
                    <svg width="4" height="18"><path d="M.5 1.500h2v15h-2z" fill="none" stroke="#e4e4e4" /></svg>
                </TitleLeft>
                <Title>BotChiefEditor 3.9.6 (Developer Version)</Title>
                <WindowButtons>
                    <button aria-label="Minimize"><svg width="12" height="12"><path d="M2 8h8v2H2z" fill="#fff" /></svg></button>
                    <button aria-label="Restore"><svg width="14" height="12" fill="none" stroke="#fff"><path d="M5 3.500V1.500h7v5h-2M2 4.500h7v5H2zM2 5.500h7" /></svg></button>
                    <button aria-label="Close"><svg width="12" height="12"><path d="M2 2l7 8M9 2l-7 8" stroke="#fff" strokeWidth="1.600" /></svg></button>
                </WindowButtons>
            </TitleBar>
            <AppWindow>
                <RibbonArea />
                <Workspace>
                    <DragStrip><DragTab>Action(Drag to Project)</DragTab></DragStrip>
                    <ProjectTree />
                    <VSplitter><Grip $vertical /></VSplitter>
                    <BrowserPane />
                    <div />
                    <ActionSettings />
                </Workspace>
                <OperationPane>
                    <PaneHead $h={23}><h2>Operation screenshot</h2><PinIcon /></PaneHead>
                    <Output />
                </OperationPane>
                <BottomTabs>
                    <BottomTab $w={114} $active>Operation screenshot</BottomTab>
                    <BottomTab $w={92}>Attributes &amp; Dom</BottomTab>
                </BottomTabs>
                <StatusBar />
            </AppWindow>
            <Taskbar />
        </Desktop>
    );
}
